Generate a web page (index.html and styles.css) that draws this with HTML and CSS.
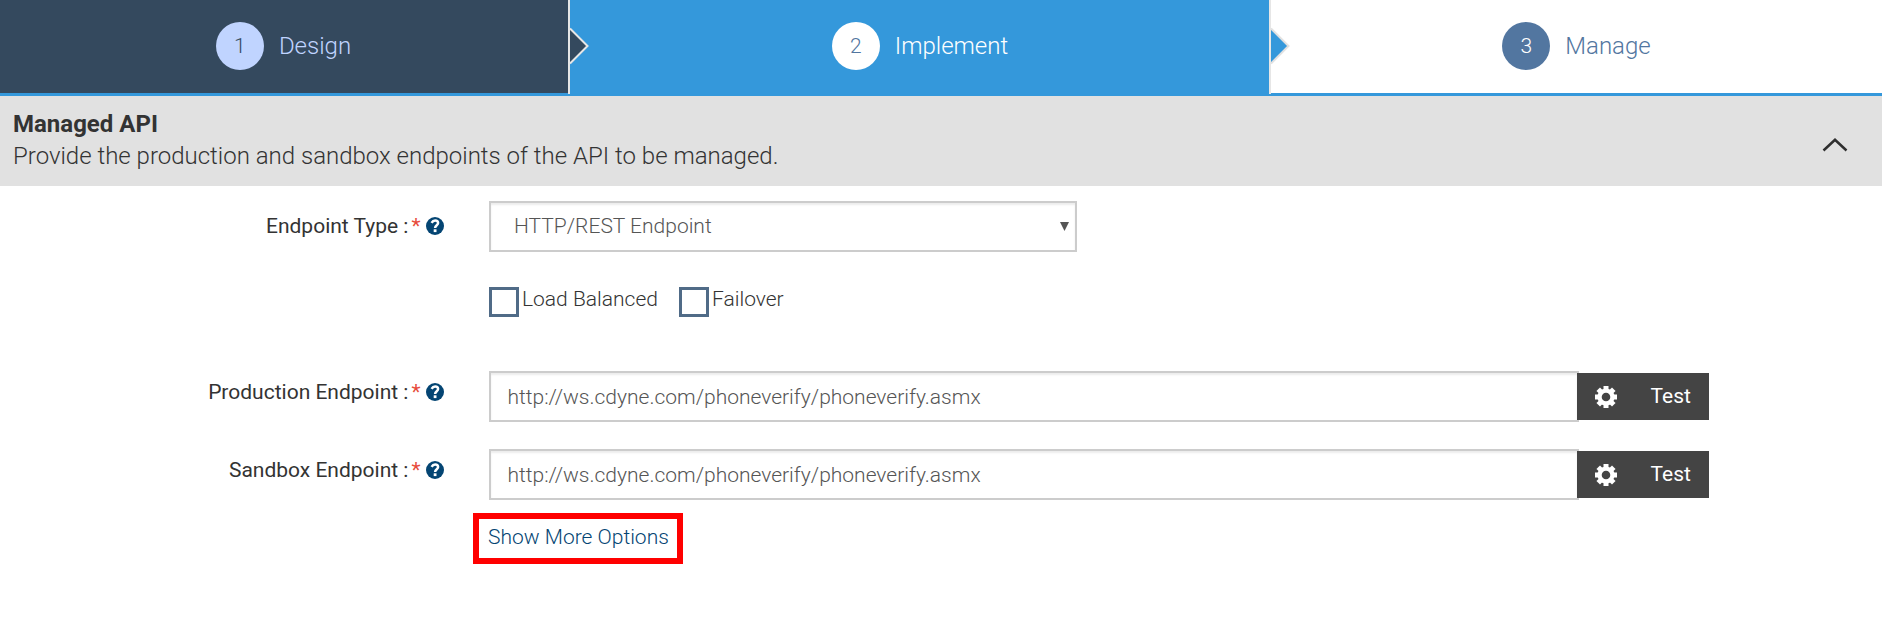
FILE: index.html
```html
<!DOCTYPE html>
<html lang="en">
<head>
<meta charset="utf-8">
<title>Managed API</title>
<link rel="stylesheet" href="styles.css">
</head>
<body>
<svg class="defs" width="0" height="0">
  <symbol id="help" viewBox="0 0 18 18"><circle cx="9" cy="9" r="9" fill="#044573"/><path d="M5.600 5.800C6.500 4.200 7.600 3.500 9.100 3.500c1.800 0 3 1.100 3 2.600C12.100 8.200 9.100 8.300 9.100 11" fill="none" stroke="#fff" stroke-width="2.500"/><rect x="7.700" y="12.300" width="2.800" height="2.800" fill="#fff"/></symbol>
  <symbol id="gear" viewBox="-11 -11 22 22"><g fill="#fff"><path fill-rule="evenodd" d="M0-8.600A8.600 8.600 0 1 1 0 8.600 8.600 8.600 0 1 1 0-8.600zM0-4.300A4.300 4.300 0 1 0 0 4.300 4.300 4.300 0 1 0 0-4.300z"/><g id="teeth"><rect x="-2.500" y="-11" width="5" height="4"/><rect x="-2.500" y="7" width="5" height="4"/><rect x="-11" y="-2.500" width="4" height="5"/><rect x="7" y="-2.500" width="4" height="5"/></g><use href="#teeth" transform="rotate(45)"/></g></symbol>
</svg>
<nav class="steps">
  <a class="step design"><span class="num">1</span><span class="name">Design</span>
    <svg class="arrow" width="20" height="38" viewBox="0 0 20 38"><path d="M1 1.500 18.500 19 1 36.500" fill="#34495e" stroke="#e6e6e6" stroke-width="2"/></svg></a>
  <a class="step implement"><span class="num">2</span><span class="name">Implement</span>
    <svg class="arrow" width="20" height="38" viewBox="0 0 20 38"><path d="M1 1.500 18.500 19 1 36.500" fill="#3498db" stroke="#e1e1e1" stroke-width="2"/></svg></a>
  <a class="step manage"><span class="num">3</span><span class="name">Manage</span></a>
</nav>
<header class="panel-head">
  <div><h1 class="title">Managed API</h1><p class="subtitle">Provide the production and sandbox endpoints of the API to be managed.</p></div>
  <svg class="chevron" width="26" height="16" viewBox="0 0 26 16"><path d="M1.500 13.500 13 2.800 24.500 13.500" fill="none" stroke="#2f2f2f" stroke-width="2.500"/></svg>
</header>
<form class="form">
  <div class="row">
    <div class="label">Endpoint Type :<span class="req">*</span><svg class="help"><use href="#help"/></svg></div>
    <div class="field select"><span class="select-text">HTTP/REST Endpoint</span><svg width="9" height="9" viewBox="0 0 9 9"><path d="M0 0h9L4.500 9z" fill="#555"/></svg></div>
  </div>
  <div class="row checks">
    <span class="check first"><i class="box"></i><span class="check-text">Load Balanced</span></span>
    <span class="check"><i class="box"></i><span class="check-text">Failover</span></span>
  </div>
  <div class="row endpoint">
    <div class="label">Production Endpoint :<span class="req">*</span><svg class="help"><use href="#help"/></svg></div>
    <div class="field url"><span class="url-text">http://ws.cdyne.com/phoneverify/phoneverify.asmx</span></div>
    <div class="buttons"><svg class="gear"><use href="#gear"/></svg><span class="test">Test</span></div>
  </div>
  <div class="row endpoint">
    <div class="label">Sandbox Endpoint :<span class="req">*</span><svg class="help"><use href="#help"/></svg></div>
    <div class="field url"><span class="url-text">http://ws.cdyne.com/phoneverify/phoneverify.asmx</span></div>
    <div class="buttons"><svg class="gear"><use href="#gear"/></svg><span class="test">Test</span></div>
  </div>
  <a class="more"><span class="more-text">Show More Options</span></a>
</form>
</body>
</html>
```
FILE: styles.css
```css
* { box-sizing: border-box; }
body { margin: 0; background: #fff; font: 300 21px/30px Roboto, sans-serif; color: #333; }
.defs { display: none; }
.steps { display: grid; grid-template-columns: 570px 701px 1fr; height: 96px; }
.step { position: relative; display: flex; align-items: center; justify-content: center; gap: 15px; padding-bottom: 1px; border-bottom: 3px solid #3498db; font-size: 24px; }
.step::after { content: ""; position: absolute; right: 0; top: 0; width: 2px; height: 94px; background: #e6e6e6; }
.step.manage::after { display: none; }
.num { width: 48px; height: 48px; border-radius: 50%; font-size: 21px; line-height: 49px; text-align: center; }
.arrow { position: absolute; z-index: 1; right: -19px; top: 27px; }
.design { padding-right: 3px; background: #34495e; color: #c0d4ff; }
.design .num { background: #c0d4ff; color: #34495e; }
.implement { padding-right: 1px; background: #3498db; color: #fff; }
.implement .num { background: #fff; color: #5276a0; }
.manage { color: #5276a0; }
.manage .num { background: #5276a0; color: #fff; }
.panel-head { display: flex; justify-content: space-between; height: 90px; padding: 12px 34px 0 13px; background: #e1e1e1; }
.title, .subtitle { margin: 0; font-size: 24px; line-height: 32px; }
.title { font-weight: 700; }
.subtitle { font-weight: 300; }
.chevron { margin-top: 29px; }
.form { padding-top: 15px; }
.row { display: flex; }
.label { display: flex; justify-content: flex-end; width: 443.5px; margin-right: 45.5px; padding-top: 10px; font-weight: 400; }
.req { margin-left: 3px; color: #e74c3c; }
.help { width: 18px; height: 18px; margin: 6px 0 0 5px; }
.field { display: flex; align-items: center; height: 51px; border: 2px solid #ccc; box-shadow: inset 0 2px 2px rgba(0,0,0,.075); color: #555; }
.select { width: 588px; justify-content: space-between; padding: 0 6px 1px 23px; }
.checks { height: 119px; padding: 35px 0 0 489px; }
.check { display: flex; width: 190px; }
.box { width: 30px; height: 30px; margin-right: 3px; border: 3px solid #506b87; }
.check-text { margin-top: -3px; }
.endpoint { height: 78px; }
.endpoint .label { padding-top: 6px; }
.url { width: 1090px; padding-left: 16.5px; }
.buttons { display: flex; align-items: center; width: 132px; height: 47px; margin: 2px 0 0 -2px; padding-left: 17.5px; background: #444; color: #fff; font-weight: 400; }
.gear { width: 22px; height: 22px; }
.test { margin: -2px 0 0 34px; }
.more { display: block; width: 210px; height: 51px; margin: -14px 0 0 473px; padding: 3px 0 0 9px; border: 6px solid red; color: #044573; }
```
